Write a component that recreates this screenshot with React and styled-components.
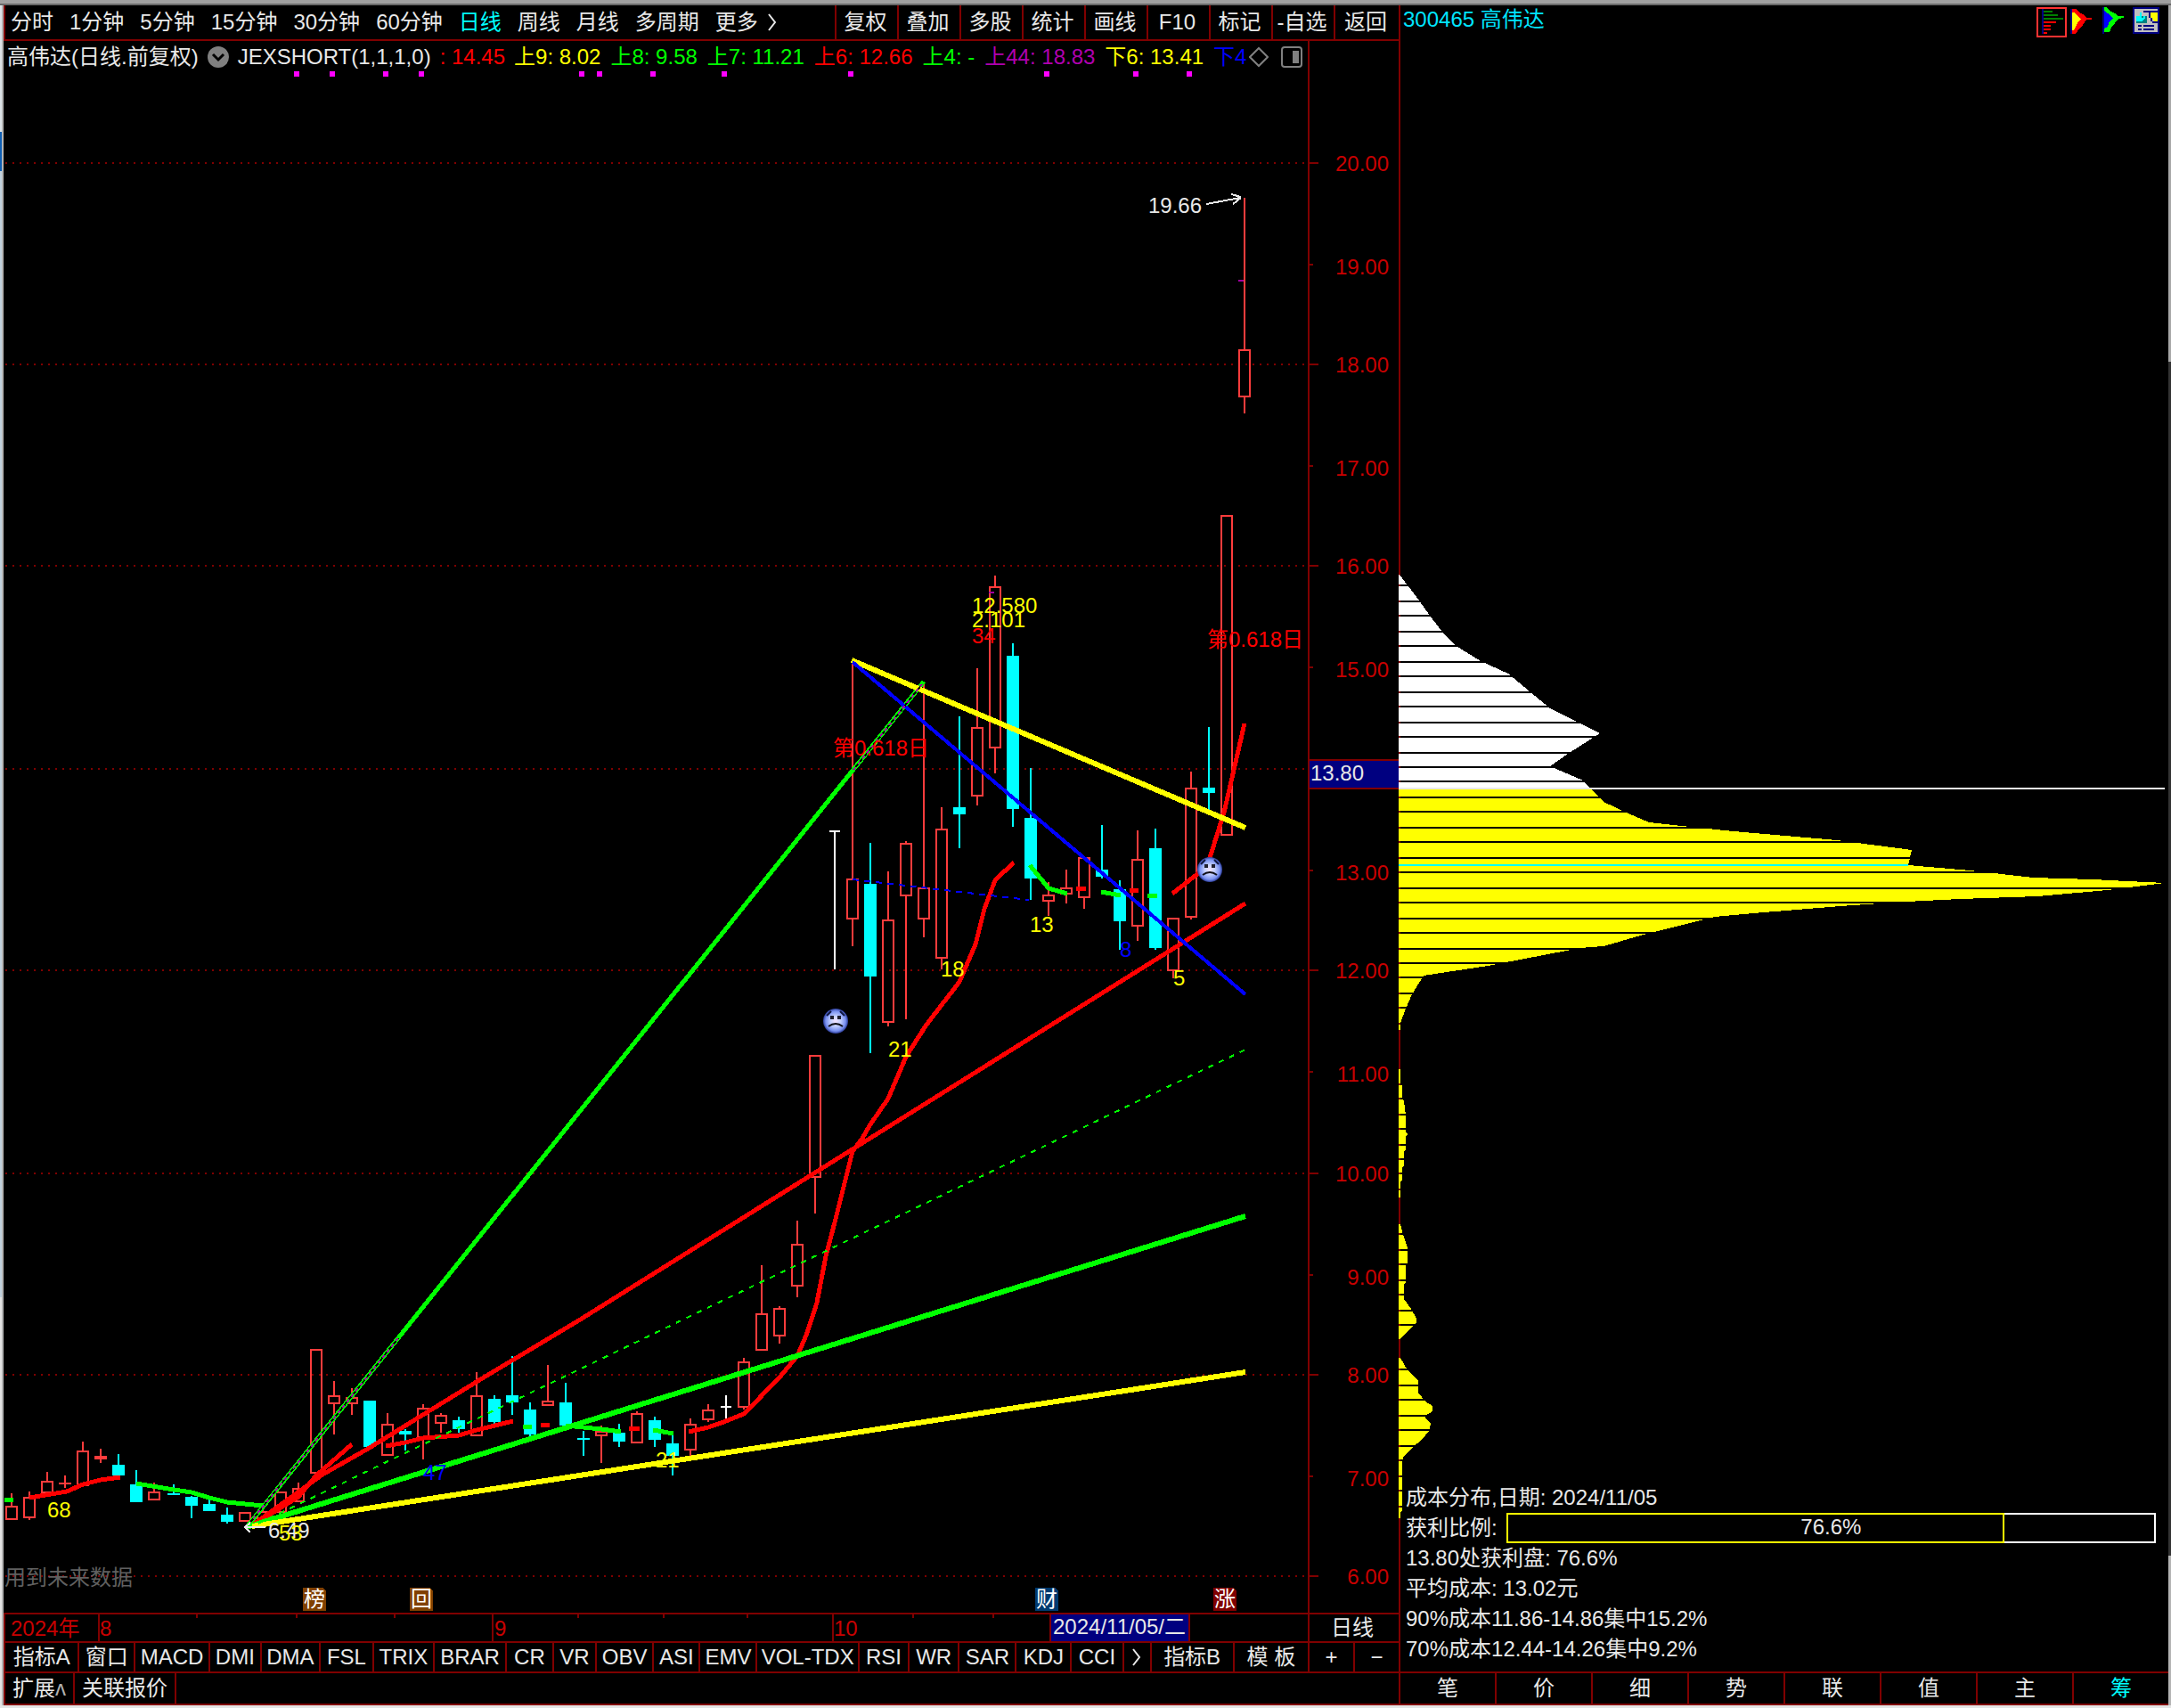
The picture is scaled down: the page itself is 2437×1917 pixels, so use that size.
import styled, { createGlobalStyle, css } from "styled-components";

const GlobalStyle = createGlobalStyle`
  * {
    box-sizing: border-box;
  }

  body {
    margin: 0;
    background: #000;
    color: #e8e8e8;
    font-family: "Liberation Sans", "Noto Sans CJK SC", sans-serif;
    font-size: 24px;
    line-height: 32px;
  }

  svg {
    display: block;
  }
`;

const line = "2px solid #800000";

/* ---------- data ---------- */

const periods = [
  "分时",
  "1分钟",
  "5分钟",
  "15分钟",
  "30分钟",
  "60分钟",
  "日线",
  "周线",
  "月线",
  "多周期",
];

const tools = [
  "复权",
  "叠加",
  "多股",
  "统计",
  "画线",
  "F10",
  "标记",
  "-自选",
  "返回",
];

const readings = [
  { text: "上9: 8.02", color: "#ffff00" },
  { text: "上8: 9.58", color: "#00ff00" },
  { text: "上7: 11.21", color: "#00ff00" },
  { text: "上6: 12.66", color: "#ff0000" },
  { text: "上4: -", color: "#00ff00" },
  { text: "上44: 18.83", color: "#b000b0" },
  { text: "下6: 13.41", color: "#ffff00" },
  { text: "下4", color: "#0000ff" },
];

const indicators = [
  { name: "指标A", span: 84 },
  { name: "窗口", span: 63 },
  { name: "MACD", span: 84 },
  { name: "DMI", span: 58 },
  { name: "DMA", span: 66 },
  { name: "FSL", span: 60 },
  { name: "TRIX", span: 68 },
  { name: "BRAR", span: 82 },
  { name: "CR", span: 52 },
  { name: "VR", span: 48 },
  { name: "OBV", span: 64 },
  { name: "ASI", span: 52 },
  { name: "EMV", span: 64 },
  { name: "VOL-TDX", span: 116 },
  { name: "RSI", span: 56 },
  { name: "WR", span: 56 },
  { name: "SAR", span: 64 },
  { name: "KDJ", span: 62 },
  { name: "CCI", span: 58 },
  { name: ">", span: 30, more: true },
  { name: "指标B", span: 94 },
  { name: "模 板", span: 85 },
];

const sideTabs = ["笔", "价", "细", "势", "联", "值", "主", "筹"];

const profit = 76.6;

// kind, high, body top, body bottom, low
const candles = [
  ["up", 1676, 1690, 1706, 1706],
  ["up", 1674, 1680, 1704, 1706],
  ["up", 1652, 1662, 1676, 1676],
  ["flat", 1656, 1664, 1666, 1670],
  ["up", 1618, 1628, 1668, 1668],
  ["flat", 1626, 1634, 1638, 1642],
  ["down", 1632, 1644, 1656, 1656],
  ["down", 1650, 1666, 1686, 1686],
  ["up", 1664, 1674, 1684, 1684],
  ["down", 1666, 1676, 1678, 1678],
  ["down", 1679, 1680, 1690, 1704],
  ["down", 1682, 1688, 1696, 1696],
  ["down", 1692, 1700, 1708, 1710],
  ["up", 1697, 1697, 1708, 1708],
  ["up", 1690, 1696, 1706, 1706],
  ["up", 1674, 1674, 1698, 1706],
  ["up", 1664, 1670, 1686, 1686],
  ["up", 1514, 1514, 1654, 1654],
  ["up", 1550, 1566, 1576, 1610],
  ["up", 1558, 1568, 1576, 1588],
  ["down", 1572, 1572, 1624, 1624],
  ["up", 1586, 1598, 1634, 1634],
  ["down", 1604, 1606, 1610, 1628],
  ["up", 1576, 1580, 1614, 1638],
  ["up", 1586, 1588, 1598, 1608],
  ["down", 1590, 1594, 1604, 1608],
  ["up", 1540, 1566, 1612, 1612],
  ["down", 1566, 1570, 1596, 1598],
  ["down", 1522, 1566, 1574, 1588],
  ["down", 1574, 1582, 1610, 1612],
  ["up", 1532, 1572, 1578, 1578],
  ["down", 1552, 1574, 1600, 1600],
  ["down", 1606, 1614, 1616, 1634],
  ["up", 1600, 1606, 1612, 1642],
  ["down", 1598, 1608, 1618, 1624],
  ["up", 1584, 1586, 1620, 1620],
  ["down", 1590, 1594, 1616, 1624],
  ["down", 1610, 1620, 1634, 1656],
  ["up", 1592, 1598, 1628, 1634],
  ["up", 1576, 1582, 1594, 1596],
  ["even", 1566, 1578, 1580, 1592],
  ["up", 1524, 1528, 1580, 1582],
  ["up", 1420, 1474, 1516, 1516],
  ["up", 1466, 1468, 1500, 1508],
  ["up", 1370, 1396, 1444, 1456],
  ["up", 1184, 1184, 1322, 1362],
  ["even", 932, 932, 934, 1088],
  ["up", 742, 986, 1032, 1062],
  ["down", 946, 992, 1096, 1182],
  ["up", 978, 1032, 1148, 1152],
  ["up", 944, 946, 1006, 1144],
  ["up", 766, 996, 1032, 1052],
  ["up", 906, 930, 1076, 1088],
  ["down", 804, 906, 914, 952],
  ["up", 750, 816, 894, 904],
  ["up", 646, 658, 840, 868],
  ["down", 722, 736, 908, 928],
  ["down", 862, 918, 986, 1010],
  ["up", 990, 1004, 1012, 1028],
  ["up", 976, 996, 1004, 1014],
  ["up", 962, 962, 1008, 1020],
  ["down", 926, 976, 984, 986],
  ["down", 988, 998, 1034, 1066],
  ["up", 932, 964, 1040, 1056],
  ["down", 930, 952, 1064, 1066],
  ["up", 1030, 1030, 1090, 1098],
  ["up", 866, 884, 1030, 1032],
  ["down", 816, 884, 890, 910],
  ["up", 578, 578, 938, 938],
  ["up", 222, 392, 446, 464],
];

const averages = [
  { color: "#00ff00", points: "5,1683 15,1683" },
  { color: "#ff0000", points: "33,1681 75,1674 93,1666 113,1661 135,1658" },
  {
    color: "#00ff00",
    points: "153,1665 195,1672 215,1675 235,1681 255,1686 295,1690",
  },
  { color: "#ff0000", points: "283,1712 335,1680 355,1656 395,1621" },
  {
    color: "#ff0000",
    points: "433,1623 455,1619 475,1614 515,1611 535,1605 576,1595",
  },
  { color: "#00ff00", points: "587,1601 597,1601" },
  { color: "#ff0000", points: "607,1599 617,1599" },
  { color: "#00ff00", points: "635,1600 675,1604 697,1607" },
  { color: "#ff0000", points: "706,1603 718,1603" },
  { color: "#00ff00", points: "733,1605 756,1609" },
  {
    color: "#ff0000",
    points:
      "773,1607 795,1602 815,1595 835,1587 875,1546 895,1522 906,1496 917,1462 927,1410 937,1372 957,1292 967,1279 977,1262 997,1233 1017,1186 1040,1150 1077,1102 1095,1060 1105,1020 1117,988 1138,968",
  },
  { color: "#00ff00", points: "1156,971 1177,997 1198,1003" },
  { color: "#ff0000", points: "1208,997 1219,997" },
  { color: "#00ff00", points: "1236,1001 1258,1005" },
  { color: "#ff0000", points: "1268,999 1278,999" },
  { color: "#00ff00", points: "1288,1005 1299,1005" },
  { color: "#ff0000", points: "1316,1003 1344,981 1358,963 1374,912 1397,812" },
];

const trends = [
  { color: "#00ff00", width: 5, points: "277,1714 1037,765" },
  {
    color: "#ff0000",
    width: 5,
    points: "283,1712 362,1655 413,1626 538,1549 653,1480 1398,1014",
  },
  { color: "#00ff00", width: 6, points: "277,1714 1398,1365" },
  { color: "#ffff00", width: 6, points: "283,1713 1398,1540" },
  { color: "#ffff00", width: 6, points: "956,741 1398,929" },
  { color: "#0000ff", width: 4, points: "957,743 1398,1116" },
];

const marks = [
  { x: 53, y: 1703, text: "68", color: "#ffff00" },
  { x: 475, y: 1661, text: "47", color: "#0000ff" },
  { x: 736, y: 1647, text: "21", color: "#ffff00" },
  { x: 301, y: 1726, text: "6.49", color: "#e8e8e8" },
  { x: 313, y: 1729, text: "53", color: "#ffff00" },
  { x: 997, y: 1186, text: "21", color: "#ffff00" },
  { x: 1056, y: 1096, text: "18", color: "#ffff00" },
  { x: 1156, y: 1046, text: "13", color: "#ffff00" },
  { x: 1257, y: 1074, text: "8", color: "#0000ff" },
  { x: 1317, y: 1106, text: "5", color: "#ffff00" },
  { x: 1091, y: 688, text: "12.580", color: "#ffff00" },
  { x: 1091, y: 704, text: "2.101", color: "#ffff00" },
  { x: 1091, y: 722, text: "34", color: "#ff0000" },
  { x: 935, y: 848, text: "第0.618日", color: "#ff0000" },
  { x: 1355, y: 726, text: "第0.618日", color: "#ff0000" },
  { x: 1289, y: 239, text: "19.66", color: "#e8e8e8" },
  { x: 5, y: 1779, text: "用到未来数据", color: "#606060" },
];

const badges = [
  { x: 340, text: "榜", color: "#804000" },
  { x: 460, text: "回", color: "#804000" },
  { x: 1162, text: "财", color: "#003a70" },
  { x: 1362, text: "涨", color: "#800000" },
];

const signals = [330, 370, 430, 470, 650, 670, 730, 810, 952, 1172, 1272, 1332];

const prices = [
  { label: "20.00", y: 183 },
  { label: "19.00", y: 297, minor: true },
  { label: "18.00", y: 409 },
  { label: "17.00", y: 523, minor: true },
  { label: "16.00", y: 635 },
  { label: "15.00", y: 749, minor: true },
  { label: "14.00", y: 863, covered: true },
  { label: "13.00", y: 977, minor: true },
  { label: "12.00", y: 1089 },
  { label: "11.00", y: 1203, minor: true },
  { label: "10.00", y: 1317 },
  { label: "9.00", y: 1431, minor: true },
  { label: "8.00", y: 1543 },
  { label: "7.00", y: 1657, minor: true },
  { label: "6.00", y: 1769 },
];

const lossShape =
  "1570,644 1581,658 1593,674 1605,691 1619,709 1633,724 1662,742 1693,756 1717,776 1740,795 1768,809 1796,823 1760,846 1740,860 1775,875 1785,885 1570,885";

const gainShapes = [
  "1570,885 1785,885 1800,900 1828,913 1851,923 1888,927 1946,933 2062,943 2146,954 2142,971 2212,977 2282,985 2349,987 2388,989 2430,991 2366,999 2287,1006 2200,1009 2140,1012 2066,1017 1968,1025 1925,1029 1845,1049 1800,1062 1774,1064 1670,1084 1598,1095 1585,1116 1578,1132 1572,1148 1572,1156 1570,1156",
  "1570,1200 1572,1200 1572,1217 1574,1218 1574,1233 1576,1236 1578,1252 1578,1271 1580,1272 1580,1274 1578,1275 1578,1291 1576,1292 1576,1309 1574,1310 1574,1325 1572,1326 1572,1344 1570,1344",
  "1570,1374 1572,1374 1574,1382 1576,1388 1580,1401 1580,1418 1578,1419 1578,1440 1576,1441 1576,1458 1584,1469 1590,1480 1590,1484 1572,1503 1570,1503",
  "1570,1524 1572,1524 1580,1538 1592,1550 1592,1563 1600,1573 1608,1578 1608,1584 1600,1589 1600,1592 1606,1598 1604,1606 1596,1616 1586,1624 1576,1634 1574,1640 1574,1695 1572,1697 1572,1704 1570,1704",
];

const slotLines = Array.from(
  { length: 62 },
  (_, i) => 656 + 2 * Math.ceil(i * 8.46)
);

/* ---------- frame ---------- */

const Desktop = styled.div`
  display: flex;
  min-height: 100vh;
  flex-direction: column;
  border-top: 4px solid #a0a0a0;
  border-bottom: 3px solid #e4e4e4;
`;

const Screen = styled.div`
  display: grid;
  flex: 1;
  grid-template-columns: 4px minmax(0, 1566fr) minmax(0, 864fr) 3px;
  border-top: 2px solid #696969;
  background: #000;
`;

const LeftEdge = styled.div`
  border-right: 2px solid #b4b4b4;
  background: linear-gradient(
    #dde3e8 142px,
    #0f5fb4 142px 186px,
    #c2d2de 186px 1450px,
    #e4e4e4 1450px
  );
`;

const RightEdge = styled.div`
  background: linear-gradient(#a8a8a8 400px, #333 400px 1740px, #b4b4b4 1740px);
`;

const Pane = styled.section`
  display: flex;
  min-width: 0;
  flex-direction: column;
`;

const plainButton = css`
  border: 0;
  padding: 0;
  background: none;
  color: inherit;
  font: inherit;
  white-space: nowrap;
  cursor: pointer;
`;

/* ---------- toolbar ---------- */

const Toolbar = styled.nav`
  display: flex;
  height: 40px;
  justify-content: space-between;
  border-bottom: ${line};
  border-left: ${line};
`;

const Periods = styled.div`
  display: flex;
  gap: 18px;
  padding-left: 6px;
`;

const PeriodButton = styled.button`
  ${plainButton}
  display: flex;
  align-items: center;
  gap: 10px;
  color: ${({ $active }) => ($active ? "#00ffff" : "inherit")};
`;

const Tools = styled.div`
  display: flex;
`;

const ToolButton = styled.button`
  ${plainButton}
  width: 70px;
  border-left: ${line};
  padding-right: 3px;

  &:last-child {
    width: 73px;
  }
`;

/* ---------- chart ---------- */

const ChartGrid = styled.div`
  display: grid;
  grid-template-columns: minmax(0, 1466fr) minmax(0, 100fr);
`;

const ChartMain = styled.div`
  border-right: ${line};
`;

const InfoRow = styled.div`
  display: flex;
  height: 34px;
  align-items: center;
  gap: 10px;
  padding: 2px 6px 0 4px;
  overflow: hidden;
  white-space: nowrap;
`;

const ReadingsBar = styled.div`
  display: flex;
  flex: 1;
  align-items: center;
  justify-content: space-between;
`;

const Readings = styled.div`
  display: flex;
  gap: 11px;
`;

const Reading = styled.span`
  color: ${({ $color }) => $color};
`;

const IconButton = styled.button`
  ${plainButton}
  flex: none;
`;

const InfoIcons = styled.div`
  display: flex;
  gap: 14px;
`;

const Drawing = styled.svg`
  width: 100%;
  height: auto;
  fill: none;
  shape-rendering: crispEdges;
`;

const Label = styled.text`
  fill: ${({ $color }) => $color};
  font-size: 24px;
`;

const DateGrid = styled(ChartGrid)`
  border-top: ${line};
`;

const DateLabel = styled.button`
  ${plainButton}
  height: 30px;
  padding-right: 4px;
  line-height: 30px;
`;

/* ---------- bottom rows ---------- */

const BottomRow = styled.div`
  display: flex;
  height: 36px;
  border-top: ${line};
  border-left: ${line};
`;

const IndicatorGrid = styled(ChartGrid)`
  border-top: ${line};
`;

const TabButton = styled.button`
  ${plainButton}
  display: flex;
  min-width: 0;
  height: 32px;
  flex: ${({ $span }) => $span || 1} 1 0;
  align-items: center;
  justify-content: center;
  border-right: ${({ $last }) => ($last ? 0 : line)};
`;

const IndicatorTabs = styled.div`
  display: flex;
  border-left: ${({ $flush }) => ($flush ? 0 : line)};
`;

const LinkButton = styled.button`
  ${plainButton}
  border-right: ${line};
  padding: 0 8px;
`;

const Caret = styled.span`
  color: #b0b0b0;
`;

const Foot = styled.div`
  border-top: ${line};
`;

/* ---------- side pane ---------- */

const SideHeader = styled.header`
  display: flex;
  height: 38px;
  align-items: flex-start;
  gap: 4px;
  border-left: ${line};
  padding: 2px 10px 0 3px;
`;

const StockName = styled.h1`
  margin: 0 auto 0 0;
  color: #00e5ff;
  font-size: 24px;
  font-weight: 400;
  line-height: 28px;
`;

const CostArea = styled.div`
  display: grid;

  & > * {
    grid-area: 1 / 1;
  }
`;

const Stats = styled.div`
  align-self: end;
  padding: 0 14px 8px 8px;
  line-height: 34px;
  white-space: nowrap;
`;

const StatLine = styled.div`
  display: flex;
  height: 34px;
  gap: 10px;
`;

const Meter = styled.div`
  display: grid;
  flex: 1;
  border: 2px solid #fff;
  line-height: 28px;
  text-align: center;

  & > * {
    grid-area: 1 / 1;
  }
`;

const MeterFill = styled.div`
  margin: -2px 0 -2px -2px;
  border: 2px solid #ffff00;
`;

const SideTabs = styled.nav`
  display: flex;
  height: 36px;
  border-top: ${line};
  border-left: ${line};
`;

const SideTab = styled.button`
  ${plainButton}
  flex: 1;
  border-right: ${line};
  color: ${({ $active }) => ($active ? "#00ffff" : "inherit")};

  &:last-child {
    border-right: 0;
  }
`;

/* ---------- icons ---------- */

function Chevron() {
  return (
    <svg width="12" height="20" fill="none" stroke="#e8e8e8" strokeWidth="2">
      <path d="M2 1 L9 10 L2 19" />
    </svg>
  );
}

function DropIcon() {
  return (
    <svg width="24" height="24">
      <circle cx="12" cy="12" r="12" fill="#808080" />
      <path d="M6 9 L12 15 L18 9" fill="none" stroke="#000" strokeWidth="3" />
    </svg>
  );
}

function DiamondIcon() {
  return (
    <svg width="22" height="24" fill="none" stroke="#808080" strokeWidth="2">
      <path d="M11 2 L21 12 L11 22 L1 12 Z" />
    </svg>
  );
}

function WindowIcon() {
  return (
    <svg width="24" height="24" fill="none">
      <rect
        x="1"
        y="1"
        width="22"
        height="22"
        rx="3"
        stroke="#808080"
        strokeWidth="2"
      />
      <rect x="13" y="5" width="7" height="14" fill="#808080" />
    </svg>
  );
}

function CostIcon() {
  return (
    <svg width="34" height="34" shapeRendering="crispEdges">
      <rect x="1" y="1" width="32" height="32" fill="#000" stroke="#ff3232" strokeWidth="2" />
      <path d="M6 2h2v28h-2z" fill="#000080" />
      <path d="M8 4h10v2h-10z M8 8h16v2h-16z M8 12h22v2h-22z" fill="#008000" />
      <path
        d="M8 16h14v2h-14z M8 20h8v2h-8z M8 24h8v2h-8z M8 28h4v2h-4z"
        fill="#ff0000"
      />
    </svg>
  );
}

function RedFlagIcon() {
  return (
    <svg width="32" height="34" shapeRendering="crispEdges">
      <path d="M0 2h2v28h-2z" fill="#000080" />
      <path d="M2 2h4l4 4 4 2 4 4 6 0v2l-6 0-4 6-4 4-4 6h-4z" fill="#ff0000" />
      <path d="M2 6h2l4 4 4 3-4 5-4 8h-2z" fill="#ffff00" />
    </svg>
  );
}

function GreenFlagIcon() {
  return (
    <svg width="30" height="34" shapeRendering="crispEdges">
      <path d="M0 0h2v30h-2z" fill="#000080" />
      <path d="M2 0h2l4 4 6 3 4 3 6 0v2l-6 1-4 5-4 5-2 5h-6z" fill="#00ff00" />
      <path d="M2 4l4 3 6 5-4 4-2 6-4 2z" fill="#0000ff" />
    </svg>
  );
}

function ReportIcon() {
  return (
    <svg width="30" height="34" shapeRendering="crispEdges">
      <rect x="1" y="1" width="28" height="28" fill="#c0c0c0" stroke="#000080" strokeWidth="2" />
      <path d="M4 10h12v8h-12z" fill="#008080" />
      <path d="M4 10h4v-4h2v6h2v-2h2v2l-4 4h-6z" fill="#00ffff" />
      <path d="M20 6h8v10h-4l-4-4z" fill="#ffff00" />
      <path
        d="M12 4h16v2h-16z M18 6h2v6h-2z M20 12h2v4h-2z M22 16h6v2h-6z M6 20h4v2h-4z M12 20h12v2h-12z M6 24h4v2h-4z M12 24h12v2h-12z"
        fill="#000080"
      />
    </svg>
  );
}

/* ---------- chart parts ---------- */

const candleColors = {
  up: "#ff3c3c",
  flat: "#ff3c3c",
  down: "#00ffff",
  even: "#ffffff",
};

// the columns are 20 wide and pick up an extra 2 in two places
function columnX(index) {
  return 13 + index * 20 + (index >= 9 ? 2 : 0) + (index >= 46 ? 2 : 0);
}

function Candle({ candle, index }) {
  const [kind, high, top, bottom, low] = candle;
  const x = columnX(index);
  const color = candleColors[kind];

  return (
    <g>
      {top > high && (
        <rect x={x - 1} y={high} width="2" height={top - high} fill={color} />
      )}
      {low > bottom && (
        <rect x={x - 1} y={bottom} width="2" height={low - bottom} fill={color} />
      )}
      {kind === "up" ? (
        <rect
          x={x - 6}
          y={top + 1}
          width="12"
          height={bottom - top - 2}
          stroke={color}
          strokeWidth="2"
        />
      ) : (
        <rect
          x={kind === "even" ? x - 6 : x - 7}
          y={top}
          width={kind === "even" ? 12 : 14}
          height={bottom - top}
          fill={color}
        />
      )}
    </g>
  );
}

function SadFace({ x, y }) {
  return (
    <g shapeRendering="auto">
      <circle cx={x} cy={y} r="14" fill="url(#face)" />
      <path
        d={`M${x - 10} ${y - 6}l5 -5 M${x + 10} ${y - 6}l-5 -5`}
        stroke="#101840"
        strokeWidth="2"
      />
      <rect x={x - 6} y={y - 6} width="4" height="4" fill="#202030" />
      <rect x={x + 2} y={y - 6} width="4" height="4" fill="#202030" />
      <path
        d={`M${x - 8} ${y + 6}q8 -6 16 0`}
        stroke="#101018"
        strokeWidth="2"
      />
    </g>
  );
}

function PricePlot() {
  return (
    <Drawing viewBox="4 80 1464 1730">
      <defs>
        <radialGradient id="face">
          <stop offset="0" stopColor="#f4e4ff" />
          <stop offset="0.4" stopColor="#c4d0ff" />
          <stop offset="0.8" stopColor="#7890f0" />
          <stop offset="1" stopColor="#2c3c98" />
        </radialGradient>
      </defs>

      {signals.map((x) => (
        <rect key={x} x={x} y="80" width="6" height="6" fill="#ff00ff" />
      ))}

      {prices
        .filter((price) => !price.minor)
        .map((price) => (
          <line
            key={price.label}
            x1="6"
            x2="1468"
            y1={price.y}
            y2={price.y}
            stroke="#800000"
            strokeWidth="2"
            strokeDasharray="2 6"
          />
        ))}

      {candles.map((candle, index) => (
        <Candle key={index} candle={candle} index={index} />
      ))}

      <g strokeWidth="5">
        {averages.map((item) => (
          <polyline key={item.points} points={item.points} stroke={item.color} />
        ))}
      </g>

      {trends.map((item) => (
        <polyline
          key={item.points}
          points={item.points}
          stroke={item.color}
          strokeWidth={item.width}
        />
      ))}

      <g strokeWidth="2">
        <path d="M279 1711 L447 1502 M958 864 L1035 768" stroke="#000" />
        <path
          d="M279 1711 L447 1502 M958 864 L1035 768"
          stroke="#a000a0"
          strokeDasharray="4 4"
        />
        <path d="M290 1710 L1398 1178" stroke="#00ff00" strokeDasharray="6 7" />
        <path d="M957 987 L1155 1010" stroke="#0000ff" strokeDasharray="7 6" />
        <path d="M1390 315h6 M1110 665h6" stroke="#a000a0" />
        <path
          d="M298 1714h-22 M281 1709l-6 5 6 6 M1354 229l38 -7 M1382 218l11 3 M1384 229l9 -7"
          stroke="#e8e8e8"
        />
      </g>

      <SadFace x={938} y={1146} />
      <SadFace x={1358} y={976} />

      {marks.map((mark) => (
        <Label key={`${mark.x}-${mark.y}`} x={mark.x} y={mark.y} $color={mark.color}>
          {mark.text}
        </Label>
      ))}

      {badges.map((badge) => (
        <g key={badge.text}>
          <path
            d={`M${badge.x} 1782h22l4 4v22h-26z`}
            fill={badge.color}
          />
          <Label x={badge.x + 1} y="1803" $color="#ffffff">
            {badge.text}
          </Label>
        </g>
      ))}
    </Drawing>
  );
}

function PriceAxis() {
  return (
    <Drawing viewBox="1470 46 100 1764">
      {prices.map((price) => (
        <g key={price.label}>
          <line
            x1="1470"
            x2={price.minor ? 1474 : 1480}
            y1={price.y}
            y2={price.y}
            stroke="#800000"
            strokeWidth="2"
          />
          {!price.covered && (
            <Label
              x="1559"
              y={price.y + (price.minor ? 11 : 9)}
              textAnchor="end"
              $color="#c80000"
            >
              {price.label}
            </Label>
          )}
        </g>
      ))}
      <rect x="1470" y="852" width="100" height="34" fill="#800000" />
      <rect x="1470" y="854" width="100" height="30" fill="#000080" />
      <Label x="1471" y="876" $color="#e8e8e8">
        13.80
      </Label>
    </Drawing>
  );
}

function DateAxis() {
  return (
    <Drawing viewBox="4 1812 1464 30">
      <path
        d="M5 1812v30 M111 1812v30 M553 1812v30 M935 1812v30 M1179 1812v30 M1335 1812v30 M221 1812v4 M333 1812v4 M443 1812v4 M649 1812v4 M745 1812v4 M839 1812v4 M1025 1812v4 M1115 1812v4"
        stroke="#800000"
        strokeWidth="2"
      />
      <rect x="1180" y="1812" width="154" height="30" fill="#000080" />
      <Label x="12" y="1836" $color="#c80000">
        2024年
      </Label>
      <Label x="112" y="1836" $color="#c80000">
        8
      </Label>
      <Label x="555" y="1836" $color="#c80000">
        9
      </Label>
      <Label x="936" y="1836" $color="#c80000">
        10
      </Label>
      <Label x="1182" y="1834" $color="#e8e8e8">
        2024/11/05/二
      </Label>
    </Drawing>
  );
}

function CostPlot() {
  return (
    <Drawing viewBox="1570 44 864 1832">
      <rect x="1570" y="44" width="2" height="1832" fill="#800000" />
      <polygon points={lossShape} fill="#ffffff" />
      {gainShapes.map((points) => (
        <polygon key={points} points={points} fill="#ffff00" />
      ))}
      {slotLines.map((y) => (
        <g key={y}>
          <rect x="1570" y={y} width="2" height="2" fill="#800000" />
          <rect x="1572" y={y} width="860" height="2" fill="#000000" />
        </g>
      ))}
      <rect x="1570" y="970" width="572" height="2" fill="#00ffff" />
      <rect x="1570" y="884" width="860" height="2" fill="#e8e8e8" />
    </Drawing>
  );
}

/* ---------- page ---------- */

function ChartPane() {
  return (
    <Pane>
      <Toolbar>
        <Periods>
          {periods.map((name) => (
            <PeriodButton key={name} $active={name === "日线"}>
              {name}
            </PeriodButton>
          ))}
          <PeriodButton>
            更多
            <Chevron />
          </PeriodButton>
        </Periods>
        <Tools>
          {tools.map((name) => (
            <ToolButton key={name}>{name}</ToolButton>
          ))}
        </Tools>
      </Toolbar>

      <ChartGrid>
        <ChartMain>
          <InfoRow>
            <span>高伟达(日线.前复权)</span>
            <IconButton aria-label="切换">
              <DropIcon />
            </IconButton>
            <span>JEXSHORT(1,1,1,0)</span>
            <Reading $color="#ff0000">: 14.45</Reading>
            <ReadingsBar>
              <Readings>
                {readings.map((item) => (
                  <Reading key={item.text} $color={item.color}>
                    {item.text}
                  </Reading>
                ))}
              </Readings>
              <InfoIcons>
                <IconButton aria-label="标记">
                  <DiamondIcon />
                </IconButton>
                <IconButton aria-label="侧栏">
                  <WindowIcon />
                </IconButton>
              </InfoIcons>
            </ReadingsBar>
          </InfoRow>
          <PricePlot />
        </ChartMain>
        <PriceAxis />
      </ChartGrid>

      <DateGrid>
        <ChartMain>
          <DateAxis />
        </ChartMain>
        <DateLabel>日线</DateLabel>
      </DateGrid>

      <IndicatorGrid>
        <IndicatorTabs>
          {indicators.map((item) => (
            <TabButton key={item.name} $span={item.span}>
              {item.more ? <Chevron /> : item.name}
            </TabButton>
          ))}
        </IndicatorTabs>
        <IndicatorTabs $flush>
          <TabButton>+</TabButton>
          <TabButton $last>−</TabButton>
        </IndicatorTabs>
      </IndicatorGrid>

      <BottomRow>
        <LinkButton>
          扩展<Caret>ʌ</Caret>
        </LinkButton>
        <LinkButton>关联报价</LinkButton>
      </BottomRow>
      <Foot />
    </Pane>
  );
}

function CostPane() {
  return (
    <Pane>
      <SideHeader>
        <StockName>300465 高伟达</StockName>
        <IconButton aria-label="筹码分布">
          <CostIcon />
        </IconButton>
        <IconButton aria-label="红旗">
          <RedFlagIcon />
        </IconButton>
        <IconButton aria-label="绿旗">
          <GreenFlagIcon />
        </IconButton>
        <IconButton aria-label="资讯">
          <ReportIcon />
        </IconButton>
      </SideHeader>

      <CostArea>
        <CostPlot />
        <Stats>
          <StatLine>成本分布,日期: 2024/11/05</StatLine>
          <StatLine>
            <span>获利比例:</span>
            <Meter>
              <MeterFill style={{ width: `calc(${profit}% + 4px)` }} />
              <span>{profit}%</span>
            </Meter>
          </StatLine>
          <StatLine>13.80处获利盘: {profit}%</StatLine>
          <StatLine>平均成本: 13.02元</StatLine>
          <StatLine>90%成本11.86-14.86集中15.2%</StatLine>
          <StatLine>70%成本12.44-14.26集中9.2%</StatLine>
        </Stats>
      </CostArea>

      <SideTabs>
        {sideTabs.map((name) => (
          <SideTab key={name} $active={name === "筹"}>
            {name}
          </SideTab>
        ))}
      </SideTabs>
      <Foot />
    </Pane>
  );
}

function App() {
  return (
    <>
      <GlobalStyle />
      <Desktop>
        <Screen>
          <LeftEdge />
          <ChartPane />
          <CostPane />
          <RightEdge />
        </Screen>
      </Desktop>
    </>
  );
}

export default App;
